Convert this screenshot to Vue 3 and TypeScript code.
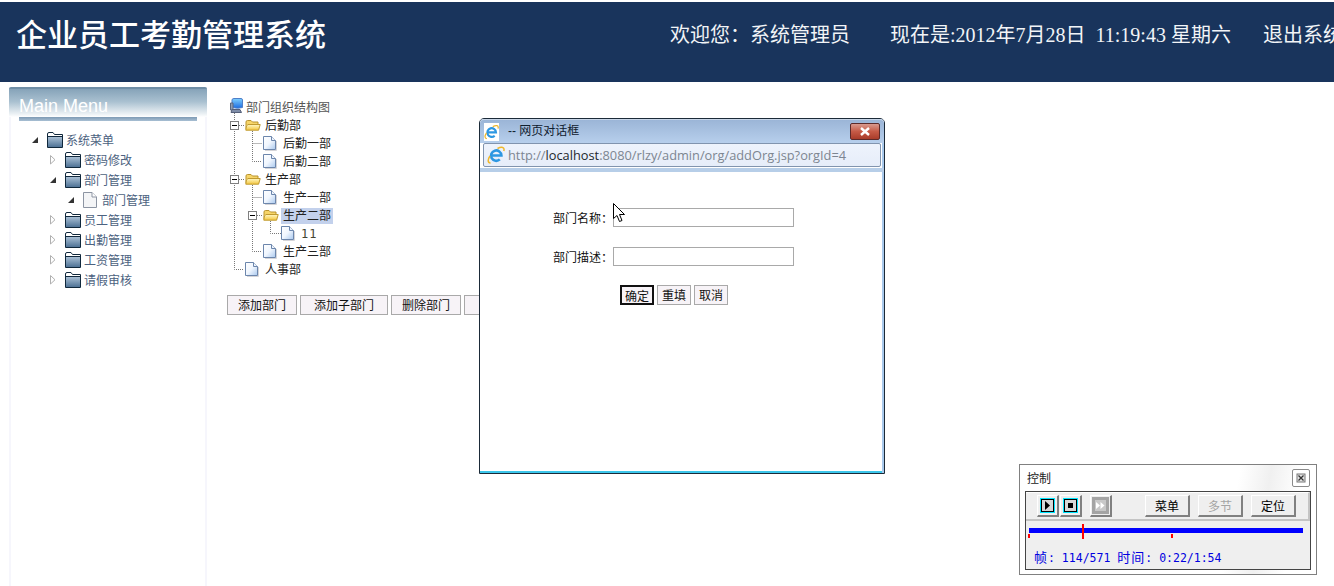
<script setup lang="ts">
interface MenuRow { label: string; level: number; open: boolean; icon: 'folder' | 'page' }
interface OrgRow { label: string; level: number; kind: 'folder' | 'doc'; selected?: boolean; latin?: boolean }

const menuRows: MenuRow[] = [
  { label: '系统菜单', level: 0, open: true, icon: 'folder' },
  { label: '密码修改', level: 1, open: false, icon: 'folder' },
  { label: '部门管理', level: 1, open: true, icon: 'folder' },
  { label: '部门管理', level: 2, open: true, icon: 'page' },
  { label: '员工管理', level: 1, open: false, icon: 'folder' },
  { label: '出勤管理', level: 1, open: false, icon: 'folder' },
  { label: '工资管理', level: 1, open: false, icon: 'folder' },
  { label: '请假审核', level: 1, open: false, icon: 'folder' },
]

const orgRows: OrgRow[] = [
  { label: '后勤部', level: 0, kind: 'folder' },
  { label: '后勤一部', level: 1, kind: 'doc' },
  { label: '后勤二部', level: 1, kind: 'doc' },
  { label: '生产部', level: 0, kind: 'folder' },
  { label: '生产一部', level: 1, kind: 'doc' },
  { label: '生产二部', level: 1, kind: 'folder', selected: true },
  { label: '11', level: 2, kind: 'doc', latin: true },
  { label: '生产三部', level: 1, kind: 'doc' },
  { label: '人事部', level: 0, kind: 'doc' },
]

const actions = [
  { label: '添加部门', width: 70 },
  { label: '添加子部门', width: 88 },
  { label: '删除部门', width: 70 },
  { label: '取消', width: 70 },
]

const clockText = '现在是:2012年7月28日\u00a0\u00a011:19:43 星期六'
</script>

<template>
  <div class="page">
    <svg class="defs" width="0" height="0" aria-hidden="true">
      <defs>
        <linearGradient id="gBlue" x1="0" y1="0" x2="0" y2="1">
          <stop offset="0" stop-color="#a9bfd4" /><stop offset="1" stop-color="#4f7396" />
        </linearGradient>
        <linearGradient id="gYellow" x1="0" y1="0" x2="0" y2="1">
          <stop offset="0" stop-color="#fff8c4" /><stop offset="1" stop-color="#f4c63e" />
        </linearGradient>
        <linearGradient id="gDoc" x1="0" y1="0" x2="1" y2="1">
          <stop offset="0" stop-color="#ffffff" /><stop offset="0.5" stop-color="#f0f6fe" /><stop offset="1" stop-color="#a9c8ee" />
        </linearGradient>
        <linearGradient id="gScreen" x1="0" y1="0" x2="0" y2="1">
          <stop offset="0" stop-color="#7fd0ff" /><stop offset="1" stop-color="#1b6ae0" />
        </linearGradient>
        <symbol id="iFolderBlue" viewBox="0 0 16 16">
          <path d="M0.5 15.5V2Q0.5 0.5 2 0.5H6L7.5 2.5H15.5V15.5Z" fill="#fff" stroke="#10283c" />
          <path d="M1 5H15V15H1Z" fill="url(#gBlue)" />
          <path d="M1 4.5H15.5" stroke="#10283c" />
        </symbol>
        <symbol id="iFolderYellow" viewBox="0 0 16 16">
          <path d="M1 12V5Q1 3.5 2.5 3.5H6L7.5 5H13V12Z" fill="#f7d568" stroke="#b8932e" />
          <path d="M0.8 13.2Q1 7.5 3 7.5H15.2L13.6 13.2Z" fill="url(#gYellow)" stroke="#c09a30" />
        </symbol>
        <symbol id="iDoc" viewBox="0 0 16 16">
          <path d="M0.5 1.5H8.5L12.5 5.5V14.5H0.5Z" fill="url(#gDoc)" stroke="#6c86ac" />
          <path d="M8.5 1.5V5.5H12.5" fill="#eef4fc" stroke="#6c86ac" />
          <path d="M13.5 6V15.5H2" fill="none" stroke="#d4d4d8" />
        </symbol>
        <symbol id="iPage" viewBox="0 0 16 16">
          <path d="M0.5 0.5H9L13.5 5V15.5H0.5Z" fill="#f4f5f7" stroke="#8d95a3" />
          <path d="M9 0.5V5H13.5" fill="#fff" stroke="#8d95a3" />
        </symbol>
        <symbol id="iHost" viewBox="0 0 16 18">
          <path d="M3 2Q3 0.5 5 0.5H12Q13.5 0.5 13.5 2V9.5Q9 11 3 9.5Z" fill="url(#gScreen)" stroke="#4f7fc8" />
          <path d="M1.5 5H4V12H1.5Z" fill="#8f9db4" stroke="#5c6880" />
          <path d="M3 11.5H11L12.5 14.5H2Z" fill="#7f8da8" stroke="#55607a" />
        </symbol>
        <symbol id="iIe" viewBox="0 0 18 18">
          <path d="M4 9.5H14.4A5.2 5.2 0 1 0 12.8 13.4" fill="none" stroke="#2c97e2" stroke-width="2.6" />
          <path d="M3.5 17C0.5 17 0.5 13.5 3 10" fill="none" stroke="#efb72a" stroke-width="1.5" />
          <path d="M10.5 2.5C14.5 0.5 18 0.8 16.8 5" fill="none" stroke="#efb72a" stroke-width="1.5" />
        </symbol>
      </defs>
    </svg>

    <header class="banner">
      <h1 class="title">企业员工考勤管理系统</h1>
      <div class="info">
        <span class="welcome">欢迎您：系统管理员</span>
        <span class="clock">{{ clockText }}</span>
        <a class="logout">退出系统</a>
      </div>
    </header>

    <main class="body">
      <aside class="side">
        <div class="side-head">Main Menu</div>
        <div class="side-rule"></div>
        <ul class="menu">
          <li
            v-for="(row, i) in menuRows"
            :key="i"
            class="menu-row"
            :class="'lvl-' + row.level"
          >
            <svg class="arrow" width="17" height="10" viewBox="0 0 17 10">
              <path v-if="row.open" d="M8 2V8H2Z" fill="#333" />
              <path v-else d="M2.5 0.5V9L7 4.75Z" fill="#fff" stroke="#b0b0b0" />
            </svg>
            <svg class="icon" width="16" height="16">
              <use :href="row.icon === 'folder' ? '#iFolderBlue' : '#iPage'" />
            </svg>
            <span class="menu-text">{{ row.label }}</span>
          </li>
        </ul>
      </aside>

      <section class="content">
        <div class="org">
          <svg class="links" width="60" height="190" aria-hidden="true">
            <g stroke="#777" stroke-dasharray="1 1" fill="none">
              <path d="M5.5 15V171.5H15" />
              <path d="M10 27.5H16" />
              <path d="M10 81.5H16" />
              <path d="M23.5 33V63.5H33" />
              <path d="M23.5 45.5H33" />
              <path d="M23.5 87V153.5H33" />
              <path d="M23.5 99.5H33" />
              <path d="M28 117.5H34" />
              <path d="M41.5 123V135.5H52" />
            </g>
          </svg>
          <div class="org-root">
            <svg width="16" height="18" class="host"><use href="#iHost" /></svg>
            <span class="root-text">部门组织结构图</span>
          </div>
          <div
            v-for="(row, i) in orgRows"
            :key="i"
            class="org-row"
            :class="'ind-' + row.level"
          >
            <span class="twist">
              <span v-if="row.kind === 'folder'" class="minus"></span>
            </span>
            <svg class="icon" width="16" height="16">
              <use :href="row.kind === 'folder' ? '#iFolderYellow' : '#iDoc'" />
            </svg>
            <span class="org-label" :class="{ selected: row.selected, latin: row.latin }">{{ row.label }}</span>
          </div>
        </div>
        <div class="actions">
          <button
            v-for="a in actions"
            :key="a.label"
            class="action"
            :style="{ width: a.width + 'px' }"
          >{{ a.label }}</button>
        </div>
      </section>
    </main>

    <div class="dialog">
      <div class="dlg-title">
        <span class="dlg-page"><svg width="16" height="16"><use href="#iIe" /></svg></span>
        <span class="dlg-caption">-- 网页对话框</span>
        <span class="dlg-close">
          <svg width="12" height="9" viewBox="0 0 12 9">
            <path d="M2 1L10 8M10 1L2 8" stroke="#fff" stroke-width="2.4" />
          </svg>
        </span>
      </div>
      <div class="dlg-url">
        <svg width="18" height="18"><use href="#iIe" /></svg>
        <span class="url-text">http://<b>localhost</b>:8080/rlzy/admin/org/addOrg.jsp?orgId=4</span>
      </div>
      <div class="dlg-body">
        <div class="field">
          <label class="field-label">部门名称：</label>
          <input class="field-input" type="text" />
        </div>
        <div class="field">
          <label class="field-label">部门描述：</label>
          <input class="field-input" type="text" />
        </div>
        <div class="dlg-buttons">
          <button class="dlg-btn default">确定</button>
          <button class="dlg-btn">重填</button>
          <button class="dlg-btn">取消</button>
        </div>
      </div>
    </div>

    <svg class="cursor" width="14" height="20" viewBox="0 0 14 20" aria-hidden="true">
      <path d="M0.5 0.5V15.5L4 12.5L6.5 18.5L9 17.5L6.5 11.5H11.5Z" fill="#fff" stroke="#000" />
    </svg>

    <div class="control">
      <div class="ctl-head">
        <span class="ctl-caption">控制</span>
        <span class="ctl-close">
          <svg width="10" height="10" viewBox="0 0 10 10">
            <rect x="1" y="1" width="8" height="8" fill="#e4e4e4" stroke="#777" />
            <path d="M2.5 2.5L7.5 7.5M7.5 2.5L2.5 7.5" stroke="#333" stroke-width="1.3" />
          </svg>
        </span>
      </div>
      <div class="ctl-panel">
        <div class="ctl-tools">
          <div class="ctl-group">
            <button class="ico-btn">
              <span class="glyph"><svg width="5" height="9" viewBox="0 0 5 9"><path d="M0 0V9L5 4.5Z" fill="#000" /></svg></span>
            </button>
            <button class="ico-btn">
              <span class="glyph"><svg width="5" height="5"><rect width="5" height="5" fill="#000" /></svg></span>
            </button>
          </div>
          <button class="ico-btn ff">
            <span class="glyph off"><svg width="9" height="7" viewBox="0 0 9 7"><path d="M0 0V7L4 3.5ZM4.5 0V7L8.5 3.5Z" fill="#fff" /></svg></span>
          </button>
          <button class="txt-btn first">菜单</button>
          <button class="txt-btn dim">多节</button>
          <button class="txt-btn">定位</button>
        </div>
        <div class="track">
          <div class="track-bar"></div>
          <i class="tick t0"></i>
          <i class="tick t1"></i>
          <i class="head"></i>
        </div>
        <div class="ctl-status"><span class="cjk">帧</span>: 114/571 <span class="cjk">时间</span>: 0:22/1:54</div>
      </div>
    </div>
  </div>
</template>

<style scoped>
.page {
  position: relative;
  width: 1334px;
  height: 586px;
  overflow: hidden;
  background: #fff;
  padding-top: 2px;
  box-sizing: border-box;
  font-family: "Liberation Sans", "Noto Sans CJK SC", sans-serif;
  font-size: 12px;
}
.defs { position: absolute; }
.banner {
  display: flex;
  height: 80px;
  box-sizing: border-box;
  background: #19345c;
  color: #fff;
  padding-left: 16px;
  white-space: nowrap;
  overflow: hidden;
  font-family: "Liberation Serif", "Noto Sans CJK SC", serif;
}
.title {
  flex: 0 0 654px;
  margin: 14px 0 0;
  font-size: 31px;
  line-height: 40px;
  font-weight: 500;
}
.info {
  display: flex;
  flex: none;
  margin-top: 21px;
  font-size: 20px;
  line-height: 24px;
  color: #f2f4f7;
}
.clock { margin-left: 40px; }
.logout { margin-left: 32px; }

.body { display: flex; height: 504px; padding-top: 5px; box-sizing: border-box; }
.side {
  flex: 0 0 198px;
  margin-left: 9px;
  background: #fff;
  box-shadow: inset 2px 0 0 #f6f6fc, inset -2px 0 0 #f6f6fc;
}
.side-head {
  height: 30px;
  box-sizing: border-box;
  padding: 7px 0 0 10px;
  border-top: 2px solid #6f8ea6;
  border-radius: 2px 2px 0 0;
  background: linear-gradient(#86a3b9, #a9c0d0 45%, #edf2f5 90%, #fff);
  color: #fff;
  font-size: 18px;
  line-height: 20px;
}
.side-rule {
  height: 4px;
  margin: 0 10px;
  background: linear-gradient(#7e9ab4, #a8bfd3);
}
.menu { list-style: none; margin: 9px 0 0; padding: 0 0 0 21px; }
.menu-row { display: flex; align-items: center; height: 20px; }
.lvl-1 { padding-left: 18px; }
.lvl-2 { padding-left: 36px; }
.arrow { flex: none; display: block; }
.icon { flex: none; display: block; }
.menu-text { margin: 2px 0 0 3px; color: #4c6280; line-height: 20px; }

.content { flex: 1; padding: 11px 0 0 20px; min-width: 0; }
.org { position: relative; margin-left: 2px; color: #222; }
.links { position: absolute; left: 0; top: 0; pointer-events: none; }
.org-root { display: flex; align-items: center; height: 18px; color: #555; }
.root-text { margin-bottom: 2px; }
.host { flex: none; margin-right: 1px; }
.org-row { position: relative; display: flex; align-items: center; height: 18px; }
.ind-1 { padding-left: 18px; }
.ind-2 { padding-left: 36px; }
.twist { flex: 0 0 16px; height: 9px; }
.minus {
  display: block;
  position: relative;
  width: 9px;
  height: 9px;
  margin-left: 1px;
  box-sizing: border-box;
  border: 1px solid #808080;
  background: #fff;
}
.minus::after {
  content: "";
  position: absolute;
  left: 1px; right: 1px; top: 3px;
  height: 1px;
  background: #000;
}
.org-label { margin: 2px 0 0 2px; padding: 0 2px; line-height: 16px; }
.selected { background: #c3d1ec; }
.latin { font-family: "DejaVu Sans Mono", monospace; letter-spacing: 1px; color: #443; }
.actions { display: flex; gap: 3px; margin-top: 17px; }
.action {
  flex: none;
  height: 20px;
  padding: 0 0 2px;
  background: #f7f3f7;
  border: 1px solid #a9a9a9;
  font: inherit;
  color: #111;
}

.dialog {
  position: absolute;
  left: 479px;
  top: 118px;
  width: 406px;
  height: 356px;
  box-sizing: border-box;
  display: flex;
  flex-direction: column;
  border: 1px solid #1b2a38;
  border-radius: 5px 5px 0 0;
  background: #fff;
  box-shadow: inset -2px 0 0 #a9c9ec, inset 0 -2px 0 #3cc6ea;
}
.dlg-title {
  display: flex;
  align-items: center;
  height: 24px;
  padding: 0 4px 0 4px;
  background: linear-gradient(#9ab4d6, #b7cfec);
  box-shadow: inset 0 1px 0 #c8d6e8;
  border-radius: 4px 4px 0 0;
}
.dlg-page {
  display: flex;
  width: 15px;
  height: 18px;
  align-items: center;
  justify-content: center;
  background: #fff;
  margin-top: 1px;
}
.dlg-caption { margin: 0 0 3px 9px; color: #10202f; font-size: 12px; }
.dlg-close {
  display: flex;
  align-items: center;
  justify-content: center;
  margin-left: auto;
  width: 30px;
  height: 17px;
  box-sizing: border-box;
  border: 1px solid #5c2a2a;
  border-radius: 2px;
  background: linear-gradient(#d99a8e, #c65a46 50%, #a93c2a);
}
.dlg-url {
  display: flex;
  align-items: center;
  height: 24px;
  margin: 0 3px;
  padding-left: 3px;
  box-sizing: border-box;
  border: 1px solid #8194ae;
  border-radius: 2px;
  background: linear-gradient(#eef3fc, #e6edf9);
}
.url-text {
  margin-left: 3px;
  font-family: "Open Sans", "Liberation Sans", sans-serif;
  font-size: 12.8px;
  color: #7d8691;
}
.url-text b { font-weight: 400; color: #23282e; }
.dlg-body {
  flex: 1;
  margin-top: 1px;
  border-top: 4px solid #b7cee8;
  padding: 36px 0 0 73px;
  color: #111;
}
.field { display: flex; align-items: center; height: 19px; margin-bottom: 20px; }
.field-label { width: 60px; line-height: 19px; padding-top: 2px; box-sizing: border-box; height: 19px; }
.field-input {
  width: 181px;
  height: 19px;
  padding: 0;
  box-sizing: border-box;
  border: 1px solid #a9a9a9;
  background: #fff;
}
.dlg-buttons { display: flex; gap: 3px; margin: -1px 0 0 67px; }
.dlg-btn {
  width: 34px;
  height: 20px;
  padding: 0 0 4px;
  box-sizing: border-box;
  background: #f7f3f7;
  border: 1px solid #a9a9a9;
  font: inherit;
  color: #111;
}
.dlg-btn.default { border: 2px solid #111; }

.cursor { position: absolute; left: 613px; top: 203px; }

.control {
  position: absolute;
  left: 1019px;
  top: 464px;
  width: 298px;
  height: 111px;
  box-sizing: border-box;
  border: 1px solid #808080;
  background: linear-gradient(100deg, #fff 70%, #f0f0f0 80%, #fff 90%);
  padding: 0 5px;
}
.ctl-head {
  display: flex;
  align-items: center;
  justify-content: space-between;
  height: 26px;
  padding: 0 0 0 2px;
  color: #222;
}
.ctl-caption { margin-bottom: 2px; }
.ctl-close {
  display: flex;
  align-items: center;
  justify-content: center;
  width: 18px;
  height: 18px;
  box-sizing: border-box;
  margin-right: 1px;
  border: 1px solid #8a8a8a;
  border-radius: 2px;
  background: #fff;
}
.ctl-panel {
  height: 79px;
  box-sizing: border-box;
  border: 1px solid #444;
  background: #efefef;
}
.ctl-tools {
  display: flex;
  align-items: center;
  height: 29px;
  padding: 0 0 0 11px;
  box-sizing: border-box;
  border-top: 1px solid #fff;
  border-right: 2px solid #c4c4c4;
  border-bottom: 2px solid #c4c4c4;
}
.ctl-group { display: flex; gap: 1px; }
button.ico-btn,
button.txt-btn {
  padding: 0;
  box-sizing: border-box;
  background: #efefef;
  border-style: solid;
  border-width: 1px 2px 2px 1px;
  border-color: #fff #808080 #808080 #fff;
  font: inherit;
  color: #000;
}
.ico-btn {
  display: flex;
  align-items: center;
  justify-content: center;
  width: 22px;
  height: 22px;
}
.glyph {
  display: flex;
  align-items: center;
  justify-content: center;
  width: 13px;
  height: 13px;
  box-sizing: border-box;
  border: 1px solid #000;
  background: #d8d8d8;
  box-shadow: 0 0 0 1px #00e5ff;
}
.glyph.off {
  width: 17px;
  height: 17px;
  border: 3px solid #a4a4a4;
  background: #c8c8c8;
  box-shadow: none;
}
.ff { margin-left: 8px; }
.txt-btn { width: 45px; height: 22px; margin-right: 8px; }
.txt-btn.first { margin-left: 33px; }
.txt-btn.dim { color: #a4a4a4; }
.track { position: relative; height: 21px; margin-top: 0; }
.track-bar {
  position: absolute;
  left: 3px;
  top: 7px;
  width: 274px;
  height: 5px;
  background: #0000ff;
}
.tick { position: absolute; top: 13px; width: 2px; height: 4px; background: #f00; }
.t0 { left: 2px; }
.t1 { left: 145px; }
.head { position: absolute; left: 56px; top: 3px; width: 2px; height: 15px; background: #f00; }
.ctl-status {
  margin: 8px 0 0 8px;
  font-family: "DejaVu Sans Mono", "Noto Sans CJK SC", monospace;
  font-size: 11.5px;
  line-height: 16px;
  color: #0000e0;
  white-space: nowrap;
}
.cjk { font-size: 13px; letter-spacing: 1px; }
</style>
<style>
html, body { margin: 0; background: #fff; }
</style>
